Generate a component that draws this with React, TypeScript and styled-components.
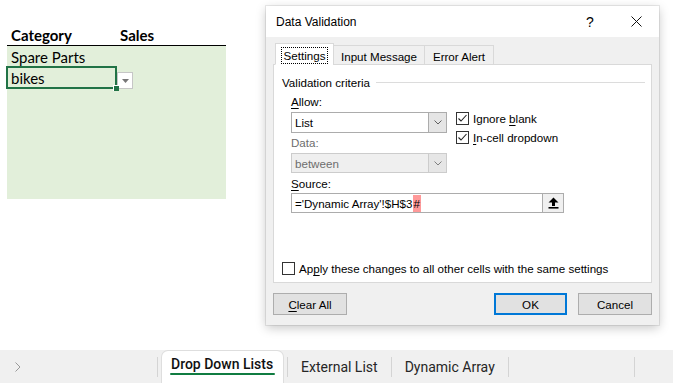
import React from "react";
import styled, { createGlobalStyle } from "styled-components";

const Global = createGlobalStyle`
  html, body { margin: 0; padding: 0; background: #ffffff; }
  body { width: 673px; height: 383px; overflow: hidden; }
`;

const Page = styled.div`
  width: 673px;
  height: 383px;
  display: flex;
  flex-direction: column;
  background: #fff;
`;

const Main = styled.div`
  flex: 1;
  position: relative;
  padding: 25px 0 0 7px;
`;

/* ---------- sheet ---------- */
const Sheet = styled.div`
  width: 219px;
  font-family: Lato, "Liberation Sans", sans-serif;
  font-size: 15px;
  color: #000;
`;

const HeaderRow = styled.div`
  display: flex;
  height: 20px;
  align-items: center;
  border-bottom: 1px solid #000;
  font-weight: 700;
`;

const Col = styled.div<{ $w: number }>`
  width: ${(p) => p.$w}px;
  padding-left: 4px;
  box-sizing: border-box;
  flex: none;
`;

const GreenBlock = styled.div`
  background: #e2efda;
  height: 153px;
`;

const Row = styled.div`
  display: flex;
  align-items: center;
  height: 21px;
`;

const SelCell = styled.div`
  position: relative;
  width: 111px;
  height: 23px;
  margin-left: -1px;
  box-sizing: border-box;
  border: 2px solid #217346;
  padding-left: 3px;
  display: flex;
  align-items: center;
`;

const FillHandle = styled.div`
  position: absolute;
  right: -4px;
  bottom: -4px;
  width: 5px;
  height: 5px;
  background: #217346;
  border-left: 1px solid #fff;
  border-top: 1px solid #fff;
`;

const CellDrop = styled.div`
  width: 16px;
  height: 17px;
  box-sizing: border-box;
  border: 1px solid #c6c6c6;
  background: #fff;
  margin-top: 6px;
  display: flex;
  align-items: center;
  justify-content: center;
`;

/* ---------- dialog ---------- */
const Dialog = styled.div`
  position: absolute;
  left: 266px;
  top: 6px;
  width: 393px;
  height: 319px;
  background: #f0f0f0;
  box-shadow: 0 0 0 1px rgba(0, 0, 0, 0.08), 0 3px 10px rgba(0, 0, 0, 0.22);
  font-family: "Liberation Sans", Arial, sans-serif;
  font-size: 11.6px;
  color: #000;
  display: flex;
  flex-direction: column;
`;

const TitleBar = styled.div`
  height: 31px;
  background: #fff;
  display: flex;
  align-items: center;
  padding-left: 10px;
  flex: none;
  font-size: 12px;
`;

const TitleText = styled.div`
  flex: 1;
`;

const TitleBtn = styled.div<{ $w: number }>`
  width: ${(p) => p.$w}px;
  height: 31px;
  display: flex;
  align-items: center;
  justify-content: center;
  font-size: 14px;
`;

const Body = styled.div`
  flex: 1;
  display: flex;
  flex-direction: column;
  padding: 7px 7px 0 7px;
`;

const TabRow = styled.div`
  display: flex;
  align-items: flex-end;
  height: 21px;
  padding-left: 2px;
  position: relative;
  z-index: 1;
  margin-bottom: -1px;
`;

const Tab = styled.div<{ $w: number; $active?: boolean }>`
  width: ${(p) => p.$w}px;
  height: ${(p) => (p.$active ? 22 : 20)}px;
  box-sizing: border-box;
  border: 1px solid #d9d9d9;
  border-bottom: ${(p) => (p.$active ? "1px solid #fff" : "1px solid #d9d9d9")};
  margin-left: ${(p) => (p.$active ? 0 : -1)}px;
  background: ${(p) => (p.$active ? "#fff" : "#f0f0f0")};
  display: flex;
  align-items: center;
  justify-content: center;
  padding-top: 3px;
  &:first-child { margin-left: 0; }
`;

const Focus = styled.span`
  outline: 1px dotted #000;
  padding: 0 2px;
  line-height: 15px;
`;

const Panel = styled.div`
  height: 219px;
  box-sizing: border-box;
  border: 1px solid #d9d9d9;
  background: #fff;
  display: flex;
  flex-direction: column;
  padding: 10px 6px 7px 8px;
`;

const GroupHead = styled.div`
  display: flex;
  align-items: center;
  height: 14px;
  gap: 6px;
`;

const GroupLine = styled.div`
  flex: 1;
  height: 1px;
  background: #dcdcdc;
`;

const Indent = styled.div`
  padding-left: 9px;
  margin-top: 6px;
`;

const Label = styled.div<{ $gray?: boolean; $mt?: number }>`
  height: 14px;
  line-height: 14px;
  color: ${(p) => (p.$gray ? "#6d6d6d" : "#000")};
  margin-top: ${(p) => p.$mt ?? 0}px;
`;

const Columns = styled.div`
  display: flex;
  gap: 9px;
`;

const LeftCol = styled.div`
  width: 156px;
`;

const RightCol = styled.div`
  padding-top: 17px;
  display: flex;
  flex-direction: column;
  gap: 6px;
`;

const Select = styled.div<{ $disabled?: boolean }>`
  margin-top: 3px;
  height: ${(p) => (p.$disabled ? 20 : 21)}px;
  box-sizing: border-box;
  border: 1px solid ${(p) => (p.$disabled ? "#cccccc" : "#acacac")};
  background: ${(p) => (p.$disabled ? "#efefef" : "#fff")};
  color: ${(p) => (p.$disabled ? "#6d6d6d" : "#000")};
  display: flex;
  align-items: stretch;
`;

const SelectText = styled.div`
  flex: 1;
  display: flex;
  align-items: center;
  padding-left: 3px;
`;

const SelectBtn = styled.div<{ $disabled?: boolean }>`
  width: 17px;
  border-left: 1px solid ${(p) => (p.$disabled ? "#cccccc" : "#acacac")};
  background: ${(p) => (p.$disabled ? "#e6e6e6" : "#e5e5e5")};
  display: flex;
  align-items: center;
  justify-content: center;
`;

const Check = styled.div`
  display: flex;
  align-items: center;
  gap: 4px;
  height: 13px;
`;

const Box = styled.div`
  width: 13px;
  height: 13px;
  box-sizing: border-box;
  border: 1px solid #333;
  background: #fff;
  display: flex;
  align-items: center;
  justify-content: center;
  flex: none;
`;

const SourceInput = styled.div`
  margin-top: 2px;
  width: 273px;
  height: 20px;
  box-sizing: border-box;
  border: 1px solid #acacac;
  background: #fff;
  display: flex;
  align-items: stretch;
`;

const SourceText = styled.div`
  flex: 1;
  display: flex;
  align-items: center;
  padding-left: 3px;
  white-space: pre;
`;

const Hilite = styled.span`
  background: #ff9999;
  padding: 2px 1px;
`;

const SourceBtn = styled.div`
  width: 20px;
  border-left: 1px solid #acacac;
  background: #f0f0f0;
  display: flex;
  align-items: center;
  justify-content: center;
`;

const ApplyRow = styled.div`
  margin-top: auto;
`;

const ButtonRow = styled.div`
  display: flex;
  align-items: center;
  margin-top: 10px;
  gap: 11px;
`;

const Button = styled.div<{ $primary?: boolean; $push?: boolean }>`
  width: ${(p) => (p.$primary ? 73 : 74)}px;
  height: 22px;
  box-sizing: border-box;
  border: ${(p) => (p.$primary ? "2px solid #0078d7" : "1px solid #adadad")};
  background: #e1e1e1;
  display: flex;
  align-items: center;
  justify-content: center;
  margin-left: ${(p) => (p.$push ? "auto" : "0")};
`;

const U = styled.span`
  text-decoration: underline;
  text-underline-offset: 2px;
`;

/* ---------- sheet tabs ---------- */
const TabBar = styled.div`
  height: 33px;
  background: #f0f0f0;
  display: flex;
  align-items: stretch;
  font-family: Roboto, "Liberation Sans", sans-serif;
  font-size: 14px;
  color: #222;
  flex: none;
`;

const Nav = styled.div`
  width: 157px;
  display: flex;
  align-items: center;
  padding-left: 15px;
  box-sizing: border-box;
`;

const Sep = styled.div`
  width: 1px;
  background: #d4d4d4;
  margin: 7px 0 6px 0;
  flex: none;
`;

const SheetTab = styled.div<{ $active?: boolean }>`
  display: flex;
  align-items: center;
  padding: ${(p) => (p.$active ? "0 9px 6px" : "0 13px")};
  margin: ${(p) => (p.$active ? "1px 4px 0 4px" : "0")};
  background: ${(p) => (p.$active ? "#fff" : "transparent")};
  border-radius: ${(p) => (p.$active ? "6px 6px 0 0" : "0")};
  box-shadow: ${(p) => (p.$active ? "0 0 0 1px #dedede" : "none")};
  font-weight: ${(p) => (p.$active ? 500 : 400)};
  color: ${(p) => (p.$active ? "#111" : "#262626")};
  position: relative;
  width: ${(p) => (p.$active ? "121px" : "auto")};
  box-sizing: border-box;
`;

const TabUnderline = styled.div`
  position: absolute;
  left: 8px;
  right: 8px;
  bottom: 8px;
  height: 2px;
  border-radius: 1px;
  background: #107c41;
`;

const Gap = styled.div<{ $w?: number }>`
  flex: ${(p) => (p.$w ? "none" : "1")};
  width: ${(p) => (p.$w ? `${p.$w}px` : "auto")};
`;

const Chevron = ({ color = "#606060" }: { color?: string }) => (
  <svg width="8" height="5" viewBox="0 0 8 5">
    <path d="M0.5 0.5 L4 4 L7.5 0.5" fill="none" stroke={color} strokeWidth="1" />
  </svg>
);

const Tick = () => (
  <svg width="11" height="11" viewBox="0 0 11 11">
    <path d="M1.5 5.5 L4 8 L9.5 2" fill="none" stroke="#222" strokeWidth="1.1" />
  </svg>
);

export default function App() {
  return (
    <Page>
      <Global />
      <Main>
        <Sheet>
          <HeaderRow>
            <Col $w={109}>Category</Col>
            <Col $w={110}>Sales</Col>
          </HeaderRow>
          <GreenBlock>
            <Row>
              <Col $w={110}>Spare Parts</Col>
            </Row>
            <Row>
              <SelCell>
                bikes
                <FillHandle />
              </SelCell>
              <CellDrop>
                <svg width="7" height="4" viewBox="0 0 7 4">
                  <path d="M0 0 H7 L3.5 4 Z" fill="#777" />
                </svg>
              </CellDrop>
            </Row>
          </GreenBlock>
        </Sheet>

        <Dialog>
          <TitleBar>
            <TitleText>Data Validation</TitleText>
            <TitleBtn $w={46}>?</TitleBtn>
            <TitleBtn $w={46}>
              <svg width="11" height="11" viewBox="0 0 11 11">
                <path d="M0.5 0.5 L10.5 10.5 M10.5 0.5 L0.5 10.5" stroke="#111" strokeWidth="1" />
              </svg>
            </TitleBtn>
          </TitleBar>
          <Body>
            <TabRow>
              <Tab $w={59} $active>
                <Focus>Settings</Focus>
              </Tab>
              <Tab $w={92}>Input Message</Tab>
              <Tab $w={70}>Error Alert</Tab>
            </TabRow>
            <Panel>
              <GroupHead>
                <span>Validation criteria</span>
                <GroupLine />
              </GroupHead>
              <Indent>
                <Columns>
                  <LeftCol>
                    <Label>
                      <U>A</U>llow:
                    </Label>
                    <Select>
                      <SelectText>List</SelectText>
                      <SelectBtn>
                        <Chevron />
                      </SelectBtn>
                    </Select>
                    <Label $gray $mt={3}>
                      Data:
                    </Label>
                    <Select $disabled>
                      <SelectText>between</SelectText>
                      <SelectBtn $disabled>
                        <Chevron color="#808080" />
                      </SelectBtn>
                    </Select>
                  </LeftCol>
                  <RightCol>
                    <Check>
                      <Box>
                        <Tick />
                      </Box>
                      <span>
                        Ignore <U>b</U>lank
                      </span>
                    </Check>
                    <Check>
                      <Box>
                        <Tick />
                      </Box>
                      <span>
                        <U>I</U>n-cell dropdown
                      </span>
                    </Check>
                  </RightCol>
                </Columns>
                <Label $mt={4}>
                  <U>S</U>ource:
                </Label>
                <SourceInput>
                  <SourceText>
                    ='Dynamic Array'!$H$3<Hilite>#</Hilite>
                  </SourceText>
                  <SourceBtn>
                    <svg width="11" height="12" viewBox="0 0 11 12">
                      <path d="M5.5 0.5 L10.5 5.5 H7 V9 H4 V5.5 H0.5 Z" fill="#000" />
                      <rect x="0.5" y="10" width="10" height="1.6" fill="#000" />
                    </svg>
                  </SourceBtn>
                </SourceInput>
              </Indent>
              <ApplyRow>
                <Check>
                  <Box />
                  <span>
                    Ap<U>p</U>ly these changes to all other cells with the same settings
                  </span>
                </Check>
              </ApplyRow>
            </Panel>
            <ButtonRow>
              <Button>
                <span>
                  <U>C</U>lear All
                </span>
              </Button>
              <Button $primary $push>
                OK
              </Button>
              <Button>Cancel</Button>
            </ButtonRow>
          </Body>
        </Dialog>
      </Main>

      <TabBar>
        <Nav>
          <svg width="6" height="10" viewBox="0 0 6 10">
            <path d="M0.5 0.5 L5 5 L0.5 9.5" fill="none" stroke="#9a9a9a" strokeWidth="1" />
          </svg>
        </Nav>
        <Sep />
        <SheetTab $active>
          Drop Down Lists
          <TabUnderline />
        </SheetTab>
        <Sep />
        <SheetTab>External List</SheetTab>
        <Sep />
        <SheetTab>Dynamic Array</SheetTab>
        <Sep />
        <Gap $w={125} />
        <Sep />
        <Gap />
      </TabBar>
    </Page>
  );
}
